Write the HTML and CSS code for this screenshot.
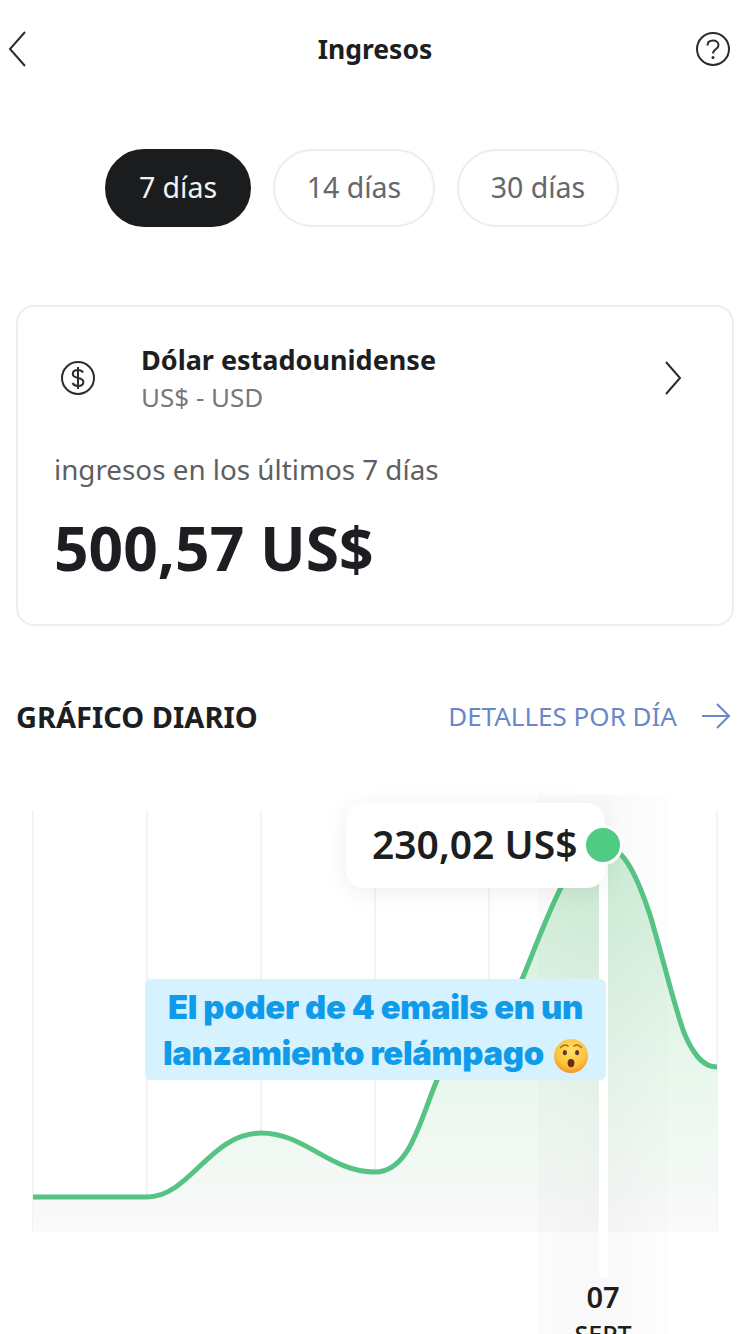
FILE: index.html
```html
<!DOCTYPE html>
<html lang="es">
<head>
    <meta charset="UTF-8">
    <meta name="viewport" content="width=device-width, initial-scale=1.0">
    <title>Ingresos</title>
    <link rel="stylesheet" href="styles.css">
</head>
<body>
    <header class="topbar">
        <div class="topbar-side">
            <svg class="icon-back" width="24" height="40" viewBox="0 0 24 40"><path d="M19 3 L4 20 L19 37"/></svg>
        </div>
        <h1 class="title">Ingresos</h1>
        <div class="topbar-side topbar-right">
            <svg class="icon-help" width="36" height="36" viewBox="0 0 36 36">
                <circle cx="18" cy="18" r="16"/>
                <path d="M12.5 14.5 C12.5 11 15 9.5 18 9.5 C21 9.5 23.5 11.3 23.5 14.2 C23.5 18 18 18 18 22.5"/>
                <circle class="dot" cx="18" cy="26.5" r="1.5"/>
            </svg>
        </div>
    </header>

    <div class="chips">
        <div class="chip chip-active">7 días</div>
        <div class="chip">14 días</div>
        <div class="chip">30 días</div>
    </div>

    <section class="card">
        <div class="currency">
            <svg class="icon-dollar" width="36" height="36" viewBox="0 0 36 36">
                <circle cx="18" cy="18" r="16"/>
                <path d="M23 12.5 C22 10.5 20 10 18 10 C15 10 12.8 11.5 12.8 14 C12.8 19.5 23.4 16.5 23.4 22 C23.4 24.5 21 26 18 26 C15.5 26 13.5 25 12.5 23 M18 7 V29"/>
            </svg>
            <div class="currency-names">
                <div class="currency-name">Dólar estadounidense</div>
                <div class="currency-code">US$ - USD</div>
            </div>
            <svg class="icon-next" width="24" height="40" viewBox="0 0 24 40"><path d="M5 4 L19 20 L5 36"/></svg>
        </div>
        <div class="earn-label">ingresos en los últimos 7 días</div>
        <div class="earn-value">500,57 US$</div>
    </section>

    <div class="section-head">
        <h2 class="section-title">GRÁFICO DIARIO</h2>
        <div class="section-link">
            <span>DETALLES POR DÍA</span>
            <svg width="30" height="28" viewBox="0 0 30 28"><path d="M1 14 H28 M16 2 L28 14 L16 26"/></svg>
        </div>
    </div>

    <div class="chart">
        <svg class="chart-svg" width="750" height="554" viewBox="0 780 750 554">
            <defs>
                <linearGradient id="areaFill" gradientUnits="userSpaceOnUse" x1="0" y1="845" x2="0" y2="1232">
                    <stop offset="0" stop-color="#cdeed6"/>
                    <stop offset="0.6" stop-color="#e9f7ed"/>
                    <stop offset="1" stop-color="#fafafa"/>
                </linearGradient>
                <linearGradient id="columnFill" x1="0" y1="0" x2="1" y2="0">
                    <stop offset="0" stop-color="#000" stop-opacity="0.015"/>
                    <stop offset="0.48" stop-color="#000" stop-opacity="0.025"/>
                    <stop offset="1" stop-color="#000" stop-opacity="0.006"/>
                </linearGradient>
            </defs>
            <g class="grid">
                <path d="M33 810 V1232"/>
                <path d="M147 810 V1232"/>
                <path d="M261 810 V1232"/>
                <path d="M375 810 V1232"/>
                <path d="M489 810 V1232"/>
                <path d="M717 810 V1232"/>
            </g>
            <path fill="url(#areaFill)" d="M33 1197 L147 1197 C190 1197 210 1133 261 1133 C305 1133 330 1172 375 1172 C410 1172 420 1120 437 1080 C460 1025 500 1030 523 977 C545 925 570 845 603 845 C625 845 640 885 650 915 C665 965 675 1010 685 1035 C695 1058 705 1067 717 1067 L717 1232 L33 1232 Z"/>
            <rect x="538" y="795" width="130" height="539" fill="url(#columnFill)"/>
            <rect class="marker-line" x="599" y="850" width="9" height="428" rx="4"/>
            <path class="curve" d="M33 1197 L147 1197 C190 1197 210 1133 261 1133 C305 1133 330 1172 375 1172 C410 1172 420 1120 437 1080 C460 1025 500 1030 523 977 C545 925 570 845 603 845 C625 845 640 885 650 915 C665 965 675 1010 685 1035 C695 1058 705 1067 717 1067"/>
        </svg>

        <div class="tooltip">230,02 US$</div>
        <div class="point"></div>

        <div class="caption">
            <div>El poder de 4 emails en un</div>
            <div>lanzamiento relámpago
                <svg class="emoji" width="34" height="34" viewBox="0 0 36 36">
                    <defs>
                        <radialGradient id="faceFill" cx="0.5" cy="0.35" r="0.7">
                            <stop offset="0" stop-color="#ffe066"/>
                            <stop offset="0.65" stop-color="#fdc23c"/>
                            <stop offset="1" stop-color="#f08a1d"/>
                        </radialGradient>
                    </defs>
                    <circle cx="18" cy="18" r="18" fill="url(#faceFill)"/>
                    <ellipse cx="11.5" cy="14.5" rx="2.2" ry="2.8" fill="#5a3a1e"/>
                    <ellipse cx="24.5" cy="14.5" rx="2.2" ry="2.8" fill="#5a3a1e"/>
                    <path d="M7 9 Q11 4.5 15 7.5 M21 7.5 Q25 4.5 29 9" fill="none" stroke="#a8651c" stroke-width="1.4" stroke-linecap="round"/>
                    <ellipse cx="18" cy="25.5" rx="3.6" ry="4.4" fill="#6b2b14"/>
                </svg>
            </div>
        </div>

        <div class="date">
            <div class="date-day">07</div>
            <div class="date-month">SEPT</div>
        </div>
    </div>
</body>
</html>
```

FILE: styles.css
```css
html, body {
    margin: 0;
    height: 1334px;
    overflow: hidden;
    background: #fff;
}
body {
    font-family: "Noto Sans", "Open Sans", sans-serif;
    color: #1c1e21;
}
svg {
    display: block;
}

.topbar {
    height: 98px;
    padding: 0 19px 0 6px;
    box-sizing: border-box;
    display: flex;
    justify-content: space-between;
    align-items: center;
}
.topbar-side {
    width: 60px;
    display: flex;
}
.topbar-right {
    justify-content: flex-end;
}
.title {
    margin: 0 0 0 13px;
    font-size: 26.5px;
    font-weight: 700;
}
.icon-back path, .icon-next path {
    fill: none;
    stroke: #2a2c30;
    stroke-width: 2;
}
.icon-help circle, .icon-help path, .icon-dollar circle, .icon-dollar path {
    fill: none;
    stroke: #2a2c30;
    stroke-width: 2;
}
.icon-help .dot {
    fill: #2a2c30;
    stroke: none;
}

.chips {
    margin-top: 51px;
    padding-left: 105px;
    display: flex;
    gap: 22px;
}
.chip {
    width: 162px;
    height: 78px;
    box-sizing: border-box;
    border: 2px solid #ecedf0;
    border-radius: 39px;
    padding-bottom: 3px;
    display: flex;
    align-items: center;
    justify-content: center;
    font-size: 28.5px;
    color: #66676b;
}
.chip-active {
    width: 146px;
    background: #1a1c1e;
    border-color: #1a1c1e;
    color: #f2f2f2;
}

.card {
    margin: 78px 0 0 16px;
    width: 718px;
    height: 321px;
    box-sizing: border-box;
    border: 2px solid #eeeef0;
    border-radius: 18px;
    padding: 34px 47px 0 36px;
}
.currency {
    display: flex;
    align-items: center;
}
.icon-dollar {
    margin: 0 45px 0 6px;
}
.currency-names {
    flex: 1;
}
.currency-name {
    font-size: 27px;
    font-weight: 700;
    line-height: 38px;
}
.currency-code {
    font-size: 26px;
    line-height: 36px;
    color: #77787c;
}
.earn-label {
    margin-top: 36px;
    font-size: 27.8px;
    line-height: 36px;
    color: #5e5f63;
}
.earn-value {
    margin-top: 23px;
    font-size: 60.5px;
    font-weight: 700;
    line-height: 76px;
}

.section-head {
    margin-top: 70px;
    padding: 0 19px 0 16px;
    height: 40px;
    display: flex;
    justify-content: space-between;
    align-items: center;
}
.section-title {
    margin: 0;
    font-size: 29px;
    font-weight: 700;
}
.section-link {
    display: flex;
    align-items: center;
    gap: 24px;
    font-size: 26px;
    color: #6a87cb;
}
.section-link path {
    fill: none;
    stroke: #6a87cb;
    stroke-width: 2;
}

.chart {
    position: relative;
    margin-top: 44px;
    height: 554px;
    overflow: hidden;
}
.grid path {
    stroke: #f3f3f5;
    stroke-width: 2;
}
.curve {
    fill: none;
    stroke: #56c384;
    stroke-width: 5;
}
.marker-line {
    fill: #fff;
}
.tooltip {
    position: absolute;
    left: 346px;
    top: 23px;
    width: 259px;
    height: 85px;
    box-sizing: border-box;
    padding: 0 0 5px 26px;
    display: flex;
    align-items: center;
    background: #fff;
    border-radius: 18px;
    box-shadow: 0 4px 24px rgba(0, 0, 0, 0.07);
    font-size: 39px;
    font-weight: 600;
}
.point {
    position: absolute;
    left: 583px;
    top: 45px;
    width: 34px;
    height: 34px;
    border: 3px solid #fff;
    border-radius: 50%;
    background: #4fcb83;
}
.caption {
    position: absolute;
    left: 145px;
    top: 199px;
    width: 461px;
    height: 101px;
    box-sizing: border-box;
    padding-top: 5px;
    background: #d5f2fe;
    border-radius: 6px;
    font-family: Inter, "Liberation Sans", sans-serif;
    font-size: 32.8px;
    font-weight: 900;
    line-height: 46px;
    letter-spacing: -0.3px;
    color: #0f9bea;
    text-align: center;
}
.emoji {
    display: inline-block;
    vertical-align: -8px;
    margin-left: 4px;
}
.date {
    position: absolute;
    left: 553px;
    top: 498px;
    width: 100px;
    text-align: center;
}
.date-day {
    font-size: 29px;
    font-weight: 600;
    line-height: 38px;
}
.date-month {
    font-size: 25px;
    font-weight: 500;
    line-height: 36px;
}
```
